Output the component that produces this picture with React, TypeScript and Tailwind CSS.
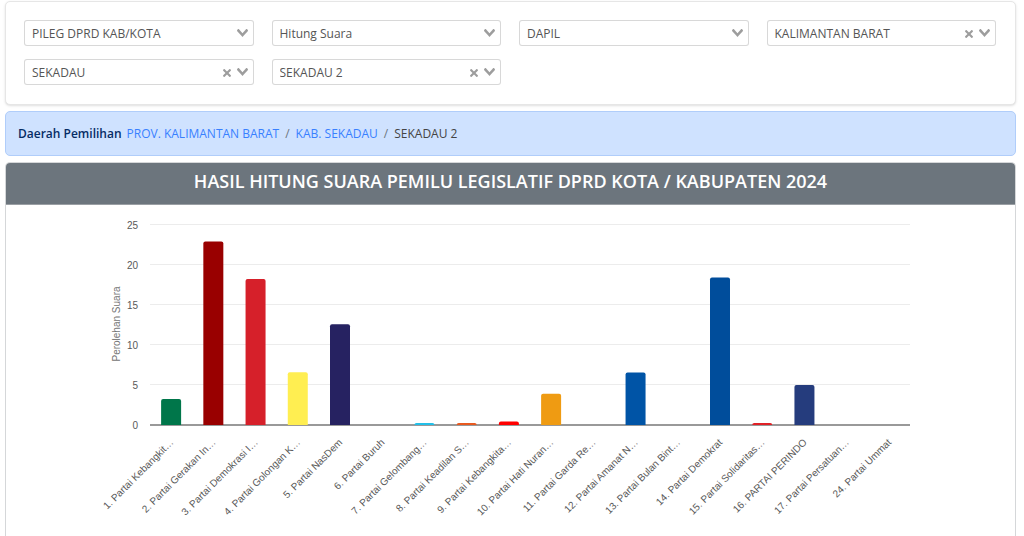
import { useState } from "react";

type Filter = { id: string; label: string; value: string; clearable?: boolean };

const filters: Filter[] = [
  { id: "jenis", label: "Jenis pemilihan", value: "PILEG DPRD KAB/KOTA" },
  { id: "tahap", label: "Tahapan", value: "Hitung Suara" },
  { id: "wilayah", label: "Jenis wilayah", value: "DAPIL" },
  { id: "provinsi", label: "Provinsi", value: "KALIMANTAN BARAT", clearable: true },
  { id: "kabupaten", label: "Kabupaten", value: "SEKADAU", clearable: true },
  { id: "dapil", label: "Daerah pemilihan", value: "SEKADAU 2", clearable: true },
];

type Party = { name: string; share: number; color: string };

const parties: Party[] = [
  { name: "1. Partai Kebangkit…", share: 3.25, color: "#00764a" },
  { name: "2. Partai Gerakan In…", share: 22.95, color: "#990000" },
  { name: "3. Partai Demokrasi I…", share: 18.25, color: "#d6202a" },
  { name: "4. Partai Golongan K…", share: 6.6, color: "#ffee51" },
  { name: "5. Partai NasDem", share: 12.6, color: "#262261" },
  { name: "6. Partai Buruh", share: 0, color: "#f58025" },
  { name: "7. Partai Gelombang…", share: 0.25, color: "#22bfe8" },
  { name: "8. Partai Keadilan S…", share: 0.25, color: "#e8591f" },
  { name: "9. Partai Kebangkita…", share: 0.45, color: "#ff0000" },
  { name: "10. Partai Hati Nuran…", share: 3.9, color: "#ef9b12" },
  { name: "11. Partai Garda Re…", share: 0, color: "#8a1a1a" },
  { name: "12. Partai Amanat N…", share: 6.55, color: "#0054a6" },
  { name: "13. Partai Bulan Bint…", share: 0, color: "#00793b" },
  { name: "14. Partai Demokrat", share: 18.45, color: "#004d9b" },
  { name: "15. Partai Solidaritas…", share: 0.25, color: "#e02127" },
  { name: "16. PARTAI PERINDO", share: 5, color: "#253c7d" },
  { name: "17. Partai Persatuan…", share: 0, color: "#00843d" },
  { name: "24. Partai Ummat", share: 0, color: "#333333" },
];

function ClearIcon() {
  return (
    <svg viewBox="0 0 10 10" className="size-2 fill-[#3c3c3c]/50" aria-hidden="true">
      <path d="M6.895455 5l2.842897-2.842898c.348864-.348863.348864-.914488 0-1.263636L9.106534.261648c-.348864-.348864-.914489-.348864-1.263636 0L5 3.104545 2.157102.261648c-.348863-.348864-.914488-.348864-1.263636 0L.261648.893466c-.348864.348864-.348864.914489 0 1.263636L3.104545 5 .261648 7.842898c-.348864.348863-.348864.914488 0 1.263636l.631818.631818c.348864.348864.914773.348864 1.263636 0L5 6.895455l2.842898 2.842897c.348863.348864.914772.348864 1.263636 0l.631818-.631818c.348864-.348864.348864-.914489 0-1.263636L6.895455 5z" />
    </svg>
  );
}

function ChevronIcon() {
  return (
    <svg viewBox="0 0 14 10" className="h-2 w-[11px] fill-[#3c3c3c]/50" aria-hidden="true">
      <path d="M9.211364 7.59931l4.48338-4.867229c.407008-.441854.407008-1.158247 0-1.60046l-.73712-.80023c-.407008-.441854-1.066904-.441854-1.474243 0L7 5.198617 2.51662.33139c-.407008-.441853-1.066904-.441853-1.474243 0l-.737121.80023c-.407008.441854-.407008 1.158248 0 1.600461l4.48338 4.867228L7 10l2.211364-2.40069z" />
    </svg>
  );
}

function FilterSelect({ filter }: { filter: Filter }) {
  const [value, setValue] = useState(filter.value);
  return (
    <div className="relative">
      <select
        id={filter.id}
        aria-label={filter.label}
        value={value}
        onChange={(e) => setValue(e.target.value)}
        className="block h-[26px] w-full appearance-none rounded-[3px] border border-[#3c3c3c]/20 bg-white pt-px pr-9 pl-[7px] text-xs text-[#555]"
      >
        {filter.clearable && <option value=""></option>}
        <option value={filter.value}>{filter.value}</option>
      </select>
      <div className="pointer-events-none absolute inset-y-0 right-[6px] flex items-center gap-[6px]">
        {filter.clearable && (
          <button
            type="button"
            aria-label={`Hapus ${filter.label}`}
            onClick={() => setValue("")}
            className="pointer-events-auto pt-[2px]"
          >
            <ClearIcon />
          </button>
        )}
        <ChevronIcon />
      </div>
    </div>
  );
}

const AXIS_LEFT = 144;
const AXIS_RIGHT = 904;
const BASE = 220;
const UNIT = 8;
const BAR = 20;
const STEP = (AXIS_RIGHT - AXIS_LEFT) / parties.length;

function barPath(center: number, share: number) {
  const left = center - BAR / 2;
  const right = center + BAR / 2;
  const top = BASE - share * UNIT;
  const r = Math.min(2, share * UNIT);
  return `M${left} ${BASE}V${top + r}Q${left} ${top} ${left + r} ${top}H${right - r}Q${right} ${top} ${right} ${top + r}V${BASE}Z`;
}

function VoteChart() {
  return (
    <svg
      viewBox="0 0 1009 332"
      role="img"
      aria-label="Perolehan Suara"
      className="block h-auto w-full font-['Liberation_Sans',Arial,sans-serif] text-[10px]"
    >
      {[5, 10, 15, 20, 25].map((t) => (
        <line
          key={t}
          x1={AXIS_LEFT}
          x2={AXIS_RIGHT}
          y1={BASE - t * UNIT - 0.5}
          y2={BASE - t * UNIT - 0.5}
          stroke="#ececec"
        />
      ))}
      {[0, 5, 10, 15, 20, 25].map((t) => (
        <text key={t} x={132} y={BASE - t * UNIT + 4} textAnchor="end" fill="#595959">
          {t}
        </text>
      ))}
      <text transform="translate(114 119) rotate(-90)" textAnchor="middle" fill="#757575">
        Perolehan Suara
      </text>
      <line x1={AXIS_LEFT} x2={AXIS_RIGHT} y1={BASE} y2={BASE} stroke="#777" strokeWidth={1.4} />
      {parties.map((p, i) => {
        const center = AXIS_LEFT + STEP * (i + 0.5);
        return (
          <g key={p.name}>
            {p.share > 0 && <path d={barPath(center, p.share)} fill={p.color} />}
            <text
              transform={`translate(${center + 3} 238) rotate(-45)`}
              textAnchor="end"
              fill="#595959"
            >
              {p.name}
            </text>
          </g>
        );
      })}
    </svg>
  );
}

export default function App() {
  return (
    <main className="flex min-h-screen flex-col gap-[6px] overflow-hidden bg-white pt-px pr-2 pl-[5px] font-['Open_Sans','Noto_Sans',sans-serif]">
      <form className="grid grid-cols-4 gap-x-[18px] gap-y-[13px] rounded-[5px] border border-[#e6e6e6] bg-white pt-[18px] pr-[19px] pb-[19px] pl-[18px] shadow-sm">
        {filters.map((f) => (
          <FilterSelect key={f.id} filter={f} />
        ))}
      </form>

      <nav
        aria-label="Daerah Pemilihan"
        className="flex h-[45px] items-center rounded-[5px] border border-[#b0cdfa] bg-[#cfe2ff] px-3 text-xs"
      >
        <strong className="mr-[5px] font-semibold text-[#052c65]">Daerah Pemilihan</strong>
        <ol className="flex items-center gap-[6px]">
          <li>
            <a href="#provinsi" className="text-[#3880ff]">
              PROV. KALIMANTAN BARAT
            </a>
          </li>
          <li aria-hidden="true" className="text-[#6c757d]">
            /
          </li>
          <li>
            <a href="#kabupaten" className="text-[#3880ff]">
              KAB. SEKADAU
            </a>
          </li>
          <li aria-hidden="true" className="text-[#6c757d]">
            /
          </li>
          <li aria-current="page" className="text-[#444]">
            SEKADAU 2
          </li>
        </ol>
      </nav>

      <section className="grow rounded-t-[5px] border border-b-0 border-[#d5d7d9]">
        <h1 className="rounded-t-[4px] border-b border-[#9a9fa4] bg-[#6c757d] pt-1 pb-[9px] text-center text-lg font-semibold text-white">
          HASIL HITUNG SUARA PEMILU LEGISLATIF DPRD KOTA / KABUPATEN 2024
        </h1>
        <VoteChart />
      </section>
    </main>
  );
}
